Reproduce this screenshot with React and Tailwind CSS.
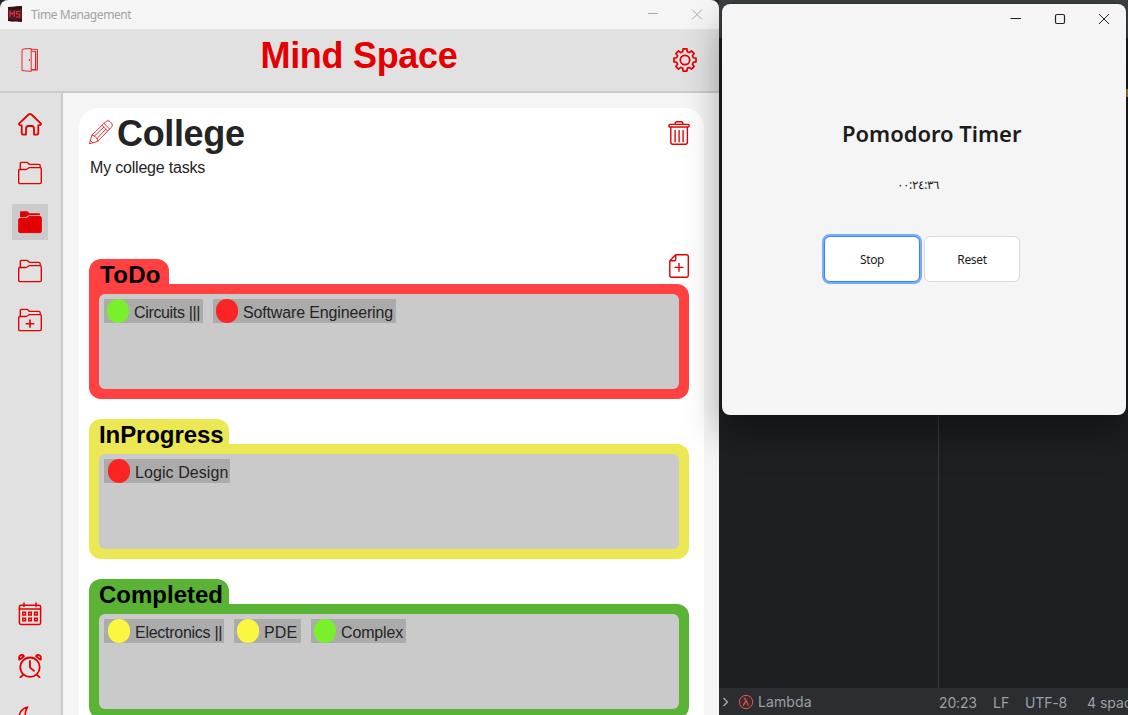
import React from "react";

function Icon({ children, width = "1.5", className = "" }) {
  return (
    <svg viewBox="0 0 24 24" fill="none" stroke="#e30000" strokeWidth={width} strokeLinecap="round" strokeLinejoin="round" className={`size-6 shrink-0 ${className}`}>
      {children}
    </svg>
  );
}

function Home() {
  return (
    <Icon width="1.8">
      <path d="M1 11.7 10.6 2.5Q12 1.3 13.4 2.5L23 11.7Q23 13.3 20.3 13.3V21Q20.3 22.6 18.8 22.6H16V17Q16 14 13.8 14H10.2Q8 14 8 17V22.6H5.2Q3.7 22.6 3.7 21V13.3Q1 13.3 1 11.7Z" />
    </Icon>
  );
}

function Folder({ filled, plus }) {
  const front = "M1.7 8.5H7.8Q9 8.5 9.8 7.6T11.8 6.6H22Q23.3 6.6 23.3 7.9V21.2Q23.3 22.6 22 22.6H2Q.7 22.6 .7 21.2V9.5Q.7 8.5 1.7 8.5Z";
  if (filled)
    return (
      <Icon width="1">
        <path fill="#e30000" stroke="none" d="M2 2Q2 1.2 3 1.2H9Q10 1.2 10.7 2.4T12.2 3.3H21Q22 3.3 22 4.3V5.2H12Q9.8 5.2 9 6.2T7.5 7.2H2Z" />
        <path fill="#e30000" d={front} />
      </Icon>
    );
  return (
    <Icon width="1.4">
      <path d={front} />
      <path d="M2.3 8.2V2.5Q2.3 1.4 3.4 1.4H8.8Q9.7 1.4 10.3 2.3T12 3.4H20.7Q22.2 3.4 22.2 4.8V6.4" />
      {plus && <path d="M12 12V19.3M8.3 15.7H15.7" strokeWidth="1.6" />}
    </Icon>
  );
}

function CalendarGrid() {
  return (
    <Icon width="1.5">
      <rect x="1.4" y="3.3" width="21.2" height="19.2" rx="1.4" />
      <path d="M1.4 7H22.6M6 1V4.6M18 1V4.6" />
      <path strokeLinejoin="miter" d="M4.8 10.3H7.5V12.9H4.8ZM10.7 10.3H13.3V12.9H10.7ZM16.6 10.3H19.2V12.9H16.6ZM4.8 16.2H7.5V18.8H4.8ZM10.7 16.2H13.3V18.8H10.7ZM16.6 16.2H19.2V18.8H16.6Z" />
    </Icon>
  );
}

function Alarm() {
  return (
    <Icon width="1.8">
      <circle cx="12" cy="13.2" r="9.7" />
      <path d="M12 6.9V13.6L16 16.8M4.9 21 2.4 23.3M19.1 21 21.6 23.3" />
      <path d="M1.3 5.6Q.3 1.2 4 1 5.6 1 6 2.3L2.2 5.2ZM22.7 5.6Q23.7 1.2 20 1 18.4 1 18 2.3L21.8 5.2Z" />
    </Icon>
  );
}

function Moon() {
  return (
    <Icon width="1.6">
      <path d="M9.5 1C4.5 2.1 1 6.5 1 12A11 11 0 0 0 21 18C11 20 3.5 11 9.5 1Z" />
    </Icon>
  );
}

function Gear() {
  const steps = [[-15, 8.6], [-10, 11.2], [10, 11.2], [15, 8.6]];
  const points = [];
  for (let i = 0; i < 8; i++)
    for (const [offset, r] of steps) {
      const a = ((i * 45 + offset) * Math.PI) / 180;
      points.push(`${(12 + r * Math.cos(a)).toFixed(2)},${(12 + r * Math.sin(a)).toFixed(2)}`);
    }
  return (
    <Icon width="1.7">
      <polygon points={points.join(" ")} />
      <circle cx="12" cy="12" r="4.7" />
    </Icon>
  );
}

function Trash() {
  return (
    <Icon width="1.4">
      <rect x="1.9" y="3.4" width="20.2" height="2.6" rx="1.1" />
      <path d="M8 3.2Q8.2.8 9.8.8H14.2Q15.8.8 16 3.2M3.8 6.3V21.3Q3.8 23.3 5.8 23.3H18.4Q20.4 23.3 20.4 21.3V6.3M8.1 9.5V20.7M12.1 9.5V20.7M16.1 9.5V20.7" />
    </Icon>
  );
}

function FilePlus() {
  return (
    <Icon width="1.4">
      <path d="M8.7.8H19.7Q21.3.8 21.3 2.3V21.6Q21.3 23.2 19.7 23.2H4.3Q2.8 23.2 2.8 21.6V6.8ZM8.7.8V5.5Q8.7 6.8 7.4 6.8H2.8M12 9.5V17.3M8.1 13.4H15.9" />
    </Icon>
  );
}

function Door() {
  return (
    <Icon width=".8">
      <path d="M4.4 1.5 6 .9 13.2.5V23.4L4.4 22.6ZM13.5 1.4H19.5V22.1H13.5M14.2 3.4H17.7V21.5M17.7 3.4V21.5H14.2" />
      <circle cx="11.2" cy="12" r=".3" />
    </Icon>
  );
}

function Pencil() {
  return (
    <Icon width=".8">
      <path d="M.6 23.4 2.9 15.2 16.7 1.7Q18.8-.4 21 1.5L22.5 3Q24.5 5.2 22.4 7.3L8.8 21.2ZM2.9 15.2 5.5 16 8 18.5 8.8 21.2M15 3.4 20.6 9M13 5.4 18.6 11M5.5 16 14.8 7.2M8 18.5 16.8 9.2M1.5 20.5 3.5 22.5" />
    </Icon>
  );
}

function Chip({ size, dot, label, tracking = "" }) {
  return (
    <div className={`flex h-6 items-start bg-[#ababab] ${size}`}>
      <span className={`h-[23.5px] w-[22.5px] shrink-0 rounded-full ${dot}`} />
      <span className={`ml-[5px] mt-[1.5px] whitespace-nowrap text-[16px] leading-6 text-[#242424] ${tracking}`}>{label}</span>
    </div>
  );
}

function Board({ title, color, tab, children }) {
  return (
    <section className="mb-5 h-[140px] w-[600px] shrink-0">
      <h3 className={`h-[25px] rounded-t-[12px] whitespace-nowrap text-[24px] leading-[31px] font-bold text-black ${color} ${tab}`}>{title}</h3>
      <div className={`h-[115px] rounded-[12px] rounded-tl-none p-2.5 ${color}`}>
        <div className="flex h-[95px] gap-2.5 rounded-[6px] bg-[#cacaca] p-[5px]">{children}</div>
      </div>
    </section>
  );
}

function NavButton({ active, children }) {
  return <button className={`flex size-9 items-center justify-center ${active ? "bg-[#cbcbcb]" : ""}`}>{children}</button>;
}

function TaskWindow() {
  return (
    <div className="flex h-[715px] w-[719px] shrink-0 flex-col overflow-hidden rounded-t-[8px] bg-[#f5f5f5] font-['Liberation_Sans',sans-serif]">
      <div className="flex h-[29px] shrink-0 items-center pl-[7px]">
        <svg viewBox="0 0 16 18" className="-mt-px h-[18px] w-4">
          <path d="M1 2 15 1V17L1 16Z" fill="#55181f" />
          <path d="M1 2 6 2.5 9 1.5 15 1V4L1 5ZM1 14 8 15 15 14V17L10 15.5 6 16.5 1 16Z" fill="#281317" />
          <path d="M3 12V6.5L5.2 9.3 7.3 6.5V12M13.3 6.5H9.5V9H12.7V12H9" fill="none" stroke="#d83543" strokeWidth="1.2" />
        </svg>
        <span className="ml-2 mt-px font-['Noto_Sans',sans-serif] text-[12px] tracking-[-0.42px] text-[#a3a3a3]">Time Management</span>
        <svg viewBox="0 0 60 20" className="mr-3 ml-auto h-5 w-[60px]" fill="none" stroke="#aaa" strokeWidth="1">
          <path d="M1 8.5H11M45 4.5 55 14.5M55 4.5 45 14.5" />
        </svg>
      </div>
      <header className="flex h-16 shrink-0 justify-between border-b-2 border-[#cbcbcb] bg-[#e1e1e1] px-[18px] pt-[19px]">
        <Door />
        <h1 className="-mt-3 ml-[3px] text-[36px] leading-[40px] font-bold tracking-[-0.3px] text-[#e30000]">Mind Space</h1>
        <div className="mr-1"><Gear /></div>
      </header>
      <div className="flex min-h-0 flex-1">
        <nav className="flex w-[63px] shrink-0 flex-col items-center border-r-2 border-[#cbcbcb] bg-[#e1e1e1] pt-[13px] pr-px">
          <div className="flex flex-col gap-[13px]">
            <NavButton><Home /></NavButton>
            <NavButton><Folder /></NavButton>
            <NavButton active><Folder filled /></NavButton>
            <NavButton><Folder /></NavButton>
            <NavButton><Folder plus /></NavButton>
          </div>
          <div className="mt-[258px] flex flex-col gap-4">
            <NavButton><CalendarGrid /></NavButton>
            <NavButton><Alarm /></NavButton>
            <NavButton><Moon /></NavButton>
          </div>
        </nav>
        <main className="min-w-0 flex-1 pt-[15px] pl-4">
          <div className="flex h-[607px] w-[625px] flex-col overflow-hidden rounded-t-[20px] bg-white pl-2.5">
            <div className="flex h-[50px] shrink-0 pt-3 pr-[13px]">
              <Pencil />
              <h2 className="-mt-[7px] ml-1 text-[36px] leading-[42px] font-bold tracking-[-0.35px] text-[#242424]">College</h2>
              <div className="mt-px ml-auto"><Trash /></div>
            </div>
            <p className="ml-px h-24 shrink-0 text-[16px] leading-[20px] tracking-[-0.2px] text-[#242424]">My college tasks</p>
            <div className="-mb-[19px] flex h-6 shrink-0 justify-end pr-[13px]"><FilePlus /></div>
            <Board title="ToDo" color="bg-[#ff4141]" tab="w-20 pl-[11px] tracking-[0.3px]">
              <Chip size="w-[99px] pl-[2.5px]" dot="bg-[#79f02c]" label="Circuits |||" tracking="tracking-[-0.35px]" />
              <Chip size="w-[183px] pl-[2.5px]" dot="bg-[#fb2424]" label="Software Engineering" tracking="tracking-[-0.15px]" />
            </Board>
            <Board title="InProgress" color="bg-[#ece853]" tab="w-[140px] pl-2.5 tracking-[-0.1px]">
              <Chip size="w-[126px] pl-[3.5px]" dot="bg-[#fb2424]" label="Logic Design" tracking="tracking-[0.08px]" />
            </Board>
            <Board title="Completed" color="bg-[#5ab335]" tab="w-[140px] pl-2.5">
              <Chip size="w-[120px] pl-[3.5px]" dot="bg-[#f9f73f]" label="Electronics ||" tracking="tracking-[-0.27px]" />
              <Chip size="w-[67px] pl-[2.5px]" dot="bg-[#f9f73f]" label="PDE" tracking="tracking-[0.1px]" />
              <Chip size="w-[95px] pl-[2.5px]" dot="bg-[#79f02c]" label="Complex" tracking="tracking-[-0.15px]" />
            </Board>
          </div>
        </main>
      </div>
    </div>
  );
}

function EditorWindow() {
  return (
    <div className="flex h-[715px] min-w-0 flex-1 flex-col bg-[#1e1f22]">
      <div className="h-[38px] shrink-0 bg-[#3c3f41]" />
      <div className="flex min-h-0 flex-1">
        <div className="w-[220px] shrink-0 border-r border-[#393b40]" />
        <div className="flex flex-1 justify-end pt-[51px]"><div className="h-2 w-[2px] bg-[#a58a35]" /></div>
      </div>
      <footer className="flex h-[27px] shrink-0 items-center overflow-hidden bg-[#2b2d30] font-[Inter,sans-serif] text-[14px] whitespace-nowrap text-[#9da0a8]">
        <svg viewBox="0 0 8 12" className="ml-[3px] h-3 w-2 shrink-0" fill="none" stroke="#b0b2b8" strokeWidth="1.2"><path d="M1.5 2 5.5 6 1.5 10" /></svg>
        <svg viewBox="0 0 16 16" className="ml-2 size-4 shrink-0" fill="none" stroke="#db5c5c"><circle cx="8" cy="8" r="6.7" fill="#402929" /><path d="M5.7 4.3H7L10.5 11.6M7.9 6.6 5.2 11.6" strokeWidth="1.2" /></svg>
        <span className="ml-1 w-[181px] shrink-0 tracking-[0.1px]">Lambda</span>
        <span className="w-[54px] shrink-0 pt-px tracking-[-0.15px]">20:23</span>
        <span className="w-8 shrink-0 pt-px">LF</span>
        <span className="w-[62px] shrink-0 pt-px tracking-[-0.15px]">UTF-8</span>
        <span className="shrink-0 pt-px">4 spaces</span>
      </footer>
    </div>
  );
}

function TimerWindow() {
  return (
    <div className="absolute top-[4px] left-[722px] flex h-[411px] w-[404px] flex-col rounded-[8px] bg-[#f5f5f5] font-['Noto_Sans',sans-serif] text-[#1c1c1c] shadow-[0_20px_36px_rgba(0,0,0,0.36),0_0_2px_rgba(0,0,0,0.6)]">
      <svg viewBox="0 0 110 30" className="mr-2 h-[30px] w-[110px] shrink-0 self-end" fill="none" stroke="#222">
        <path d="M2.5 14.5H13M91 10 101 20M101 10 91 20" />
        <rect x="47.5" y="10.5" width="9" height="9" rx="1.5" strokeWidth="1.2" />
      </svg>
      <h2 className="mt-[83px] ml-[120px] text-[22px] leading-8 font-semibold tracking-[-0.03px] whitespace-nowrap">Pomodoro Timer</h2>
      <p className="mt-[26px] ml-[175px] h-5 text-[12px] leading-5 tracking-[-0.4px]" dir="ltr"><bdo dir="ltr">٠٠:٢٤:٣٦</bdo></p>
      <div className="mt-[41px] ml-[102px] flex gap-1 text-[12px] tracking-[-0.35px]">
        <button className="h-[46px] w-24 rounded-[6px] border border-[#3984f6] bg-white pt-0.5 ring-2 ring-[#73adff]">Stop</button>
        <button className="h-[46px] w-24 rounded-[6px] border border-[#d9d9d9] bg-white pt-0.5">Reset</button>
      </div>
    </div>
  );
}

export default function App() {
  return (
    <div className="relative flex h-[715px] w-[1128px] overflow-hidden bg-[#25262a]">
      <TaskWindow />
      <EditorWindow />
      <TimerWindow />
    </div>
  );
}
